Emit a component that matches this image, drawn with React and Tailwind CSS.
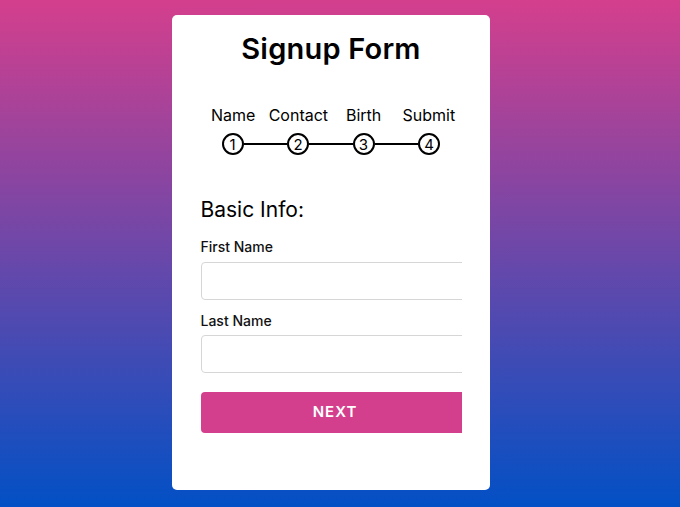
import React from "react";

const steps = ["Name", "Contact", "Birth", "Submit"];

export default function App() {
  return (
    <div
      className="w-full h-[507px] bg-[linear-gradient(to_bottom,#d43f8d,#0250c5)] pt-[15px] pl-[172px]"
      style={{ fontFamily: "Inter, 'Noto Sans', sans-serif" }}
    >
      <div className="w-[318px] h-[475px] bg-white rounded-[5px] px-[29px] flex flex-col items-center">
        <h1 className="mt-[19px] text-[29px] leading-none font-semibold text-black tracking-[0.2px]">
          Signup Form
        </h1>
        <div className="w-[261px] mt-[44px]">
          <div className="grid grid-cols-4">
            {steps.map((s) => (
              <div key={s} className="text-center text-[16px] leading-none text-black">
                {s}
              </div>
            ))}
          </div>
          <div className="flex items-center mt-[10px] pl-[21px]">
            {steps.map((s, i) => (
              <React.Fragment key={s}>
                <div className="w-[22px] h-[22px] rounded-full border-2 border-black flex items-center justify-center text-[15px] leading-none text-black shrink-0">
                  {i + 1}
                </div>
                {i < 3 && <div className="w-[43.5px] h-[2px] bg-black shrink-0" />}
              </React.Fragment>
            ))}
          </div>
        </div>
        <div className="w-[261px] mt-[42px]">
          <div className="text-[21px] leading-[1.2] text-black">Basic Info:</div>
          <div className="mt-[18px] text-[14px] leading-none font-medium text-[#111]">First Name</div>
          <div className="w-[261px] overflow-hidden">
            <div className="mt-[8px] w-[300px] h-[38px] border border-[#d6d6d6] rounded-[4px] bg-white" />
          </div>
          <div className="mt-[14px] text-[14px] leading-none font-medium text-[#111]">Last Name</div>
          <div className="w-[261px] overflow-hidden">
            <div className="mt-[7px] w-[300px] h-[38px] border border-[#d6d6d6] rounded-[4px] bg-white" />
          </div>
          <div className="mt-[19px] w-[261px] overflow-hidden">
            <div className="w-[269px] h-[41px] bg-[#d43f8d] rounded-[4px] flex items-center justify-center text-white text-[15px] font-semibold tracking-[1px]">
              NEXT
            </div>
          </div>
        </div>
      </div>
    </div>
  );
}
